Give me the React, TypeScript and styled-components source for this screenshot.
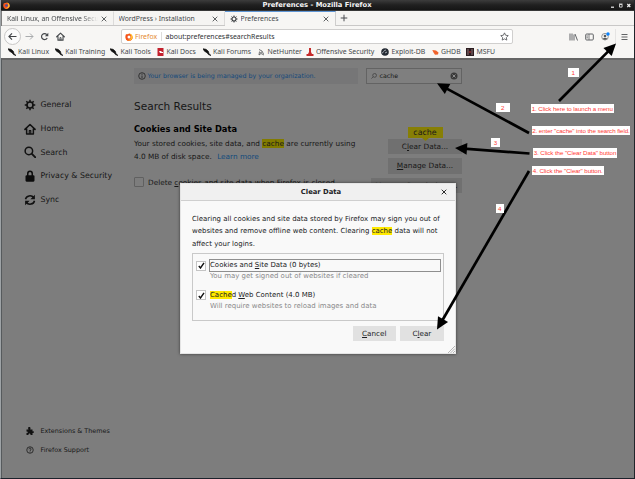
import React from "react";
import styled, { createGlobalStyle, css } from "styled-components";

const GlobalStyle = createGlobalStyle`
  * { box-sizing: border-box; }
  html, body { margin: 0; padding: 0; overflow: hidden; }
  body { font-family: "DejaVu Sans", Verdana, sans-serif; }
`;

const Window = styled.div`
  position: relative;
  width: 635px;
  height: 479px;
  display: flex;
  flex-direction: column;
  overflow: hidden;
  background: #7d7d7d;
  border-left: 1px solid #9ea3a6;
  border-right: 1px solid #20252a;
  border-bottom: 1px solid #1b222b;
`;

const TitleBar = styled.header`
  height: 11px;
  flex: none;
  display: flex;
  align-items: center;
  padding: 0 3px 1px 2px;
  background: linear-gradient(#3c3c3c, #202020 45%, #161616 88%, #4c4c4c);
  color: #f4f4f4;
`;

const Title = styled.h1`
  flex: 1;
  margin: 0;
  text-align: center;
  font-size: 6.75px;
  line-height: 9px;
  font-weight: 700;
  padding-left: 14px;
`;

const WindowButtons = styled.div`
  display: flex;
  height: 9px;
`;

const chromeFont = css`
  font-family: "Noto Sans", "Open Sans", sans-serif;
  color: #45484b;
  white-space: nowrap;
`;

const TabStrip = styled.nav`
  height: 15px;
  flex: none;
  display: flex;
  background: #f5f4f2;
  border-bottom: 1px solid #c9c8c7;
  margin-left: 1px;
`;

const Tab = styled.div<{ $width: number; $active?: boolean }>`
  ${chromeFont}
  width: ${(p) => p.$width}px;
  height: ${(p) => (p.$active ? 15 : 14)}px;
  display: flex;
  align-items: center;
  gap: 3px;
  font-size: 6.85px;
  line-height: 12px;
  padding: 0 6px 0 5px;
  border-right: 1px solid ${(p) => (p.$active ? "#cfcecd" : "#dcdbda")};
  border-top: 1px solid ${(p) => (p.$active ? "#5f96d5" : "#f5f4f2")};
  background: ${(p) => (p.$active ? "#f7f6f4" : "transparent")};
  svg { flex: none; }
`;

const TabLabel = styled.span<{ $fade?: boolean }>`
  flex: 1;
  overflow: hidden;
  ${(p) => p.$fade && "mask-image: linear-gradient(90deg, #000 82%, transparent);"}
`;

const NewTab = styled.div`
  display: flex;
  align-items: center;
  padding-left: 4px;
`;

const Toolbar = styled.div`
  height: 21px;
  flex: none;
  display: flex;
  align-items: center;
  padding: 0 6px 0 3px;
  background: #f7f6f4;
`;

const NavButtons = styled.div`
  display: flex;
  align-items: center;
  gap: 6.5px;
  width: 116.5px;
`;

const BackButton = styled.div`
  width: 17px;
  height: 17px;
  margin-right: -3px;
  display: grid;
  place-items: center;
  border: 1px solid #c8c7c6;
  border-radius: 50%;
  background: #fbfbfb;
`;

const UrlBar = styled.div`
  ${chromeFont}
  width: 392px;
  height: 15px;
  display: flex;
  align-items: center;
  padding: 0 2.5px 0 3.5px;
  background: #fff;
  border: 1px solid #d0cfce;
  border-radius: 2px;
  font-size: 6.93px;
`;

const Identity = styled.span`
  display: flex;
  align-items: center;
  gap: 2px;
  color: #e58a2e;
  padding-right: 4px;
  border-right: 1px solid #dddcdb;
  margin-right: 3.5px;
`;

const Address = styled.span`
  flex: 1;
  color: #303336;
`;

const ToolIcons = styled.div`
  flex: 1;
  display: flex;
  align-items: center;
  justify-content: flex-end;
  gap: 7px;
`;

const MenuSlot = styled.div`
  display: flex;
  align-items: center;
  height: 16px;
  padding-left: 5px;
  border-left: 1px solid #e5e4e3;
  margin-left: -2px;
`;

const Bookmarks = styled.div`
  height: 11px;
  flex: none;
  display: flex;
  align-items: center;
  padding: 0 0 1px 7px;
  background: #f7f6f4;
`;

const Bookmark = styled.div<{ $width: number }>`
  ${chromeFont}
  width: ${(p) => p.$width}px;
  flex: none;
  display: flex;
  align-items: center;
  gap: 2px;
  font-size: 6.9px;
  line-height: 10px;
  svg { flex: none; }
`;

const Page = styled.main`
  flex: 1;
  display: flex;
  border-top: 2px solid #656565;
  border-left: 1px solid #565a5d;
  color: #171717;
  background: #7d7d7d;
`;

const Sidebar = styled.aside`
  width: 132px;
  flex: none;
  display: flex;
  flex-direction: column;
  justify-content: space-between;
  padding: 33px 0 18px 22px;
`;

const NavList = styled.ul<{ $small?: boolean }>`
  list-style: none;
  margin: 0;
  padding: 0;
  font-size: ${(p) => (p.$small ? 6.42 : 7.83)}px;
  li {
    height: ${(p) => (p.$small ? 19.2 : 23.7)}px;
    display: flex;
    align-items: center;
    gap: 4.5px;
    white-space: nowrap;
  }
  li svg { flex: none; width: 12px; }
`;

const Content = styled.section`
  width: 328px;
  padding-top: 8px;
`;

const TopRow = styled.div`
  display: flex;
  justify-content: space-between;
`;

const Notice = styled.div`
  width: 223.5px;
  height: 15.5px;
  display: flex;
  align-items: center;
  gap: 2px;
  padding-left: 3.5px;
  font-size: 6.3px;
  color: #144a7c;
  background: #767677;
`;

const SearchBox = styled.div`
  width: 96px;
  height: 15.5px;
  display: flex;
  align-items: center;
  gap: 2.5px;
  padding: 0 3px 0 4px;
  font-size: 6.25px;
  border: 1px solid #636363;
  background: #7f7f7f;
  span { flex: 1; }
`;

const PageTitle = styled.h2`
  margin: 12px 0 0;
  font-size: 10.55px;
  line-height: 20px;
  font-weight: 400;
`;

const Columns = styled.div`
  display: flex;
  justify-content: space-between;
  margin-top: 2px;
`;

const Description = styled.div`
  width: 225px;
  font-size: 7.32px;
  line-height: 13.4px;
  white-space: nowrap;
  h3 { margin: 5px 0 1px; font-size: 8.3px; line-height: 13px; color: #000; }
  p { margin: 0; }
`;

const Mark = styled.mark<{ $dim?: boolean }>`
  color: inherit;
  background: ${(p) => (p.$dim ? "#827b00" : "#ffe900")};
`;

const Link = styled.a`
  color: #124a7c;
  margin-left: 3px;
`;

const CheckRow = styled.div`
  display: flex;
  align-items: center;
  gap: 4px;
  margin-top: 14px;
  height: 10px;
`;

const EmptyBox = styled.span`
  width: 10px;
  height: 10px;
  border: 1px solid #606060;
  border-radius: 1px;
`;

const Actions = styled.div`
  display: flex;
  flex-direction: column;
  align-items: flex-end;
  gap: 4.5px;
  padding-top: 9.5px;
`;

const FoundTip = styled.div`
  width: 35px;
  height: 11px;
  margin: 0 19.5px -4px 0;
  text-align: center;
  font-size: 7.9px;
  line-height: 11.5px;
  background: #877f05;
`;

const PageButton = styled.div<{ $width: number }>`
  width: ${(p) => p.$width}px;
  height: 15.3px;
  font-size: 7.38px;
  line-height: 15px;
  text-align: center;
  white-space: nowrap;
  background: #707070;
`;

const FoundPointer = styled.svg`
  position: absolute;
  left: 421px;
  top: 138px;
`;

const Dialog = styled.div`
  position: absolute;
  left: 179px;
  top: 183px;
  width: 276px;
  height: 171px;
  display: flex;
  flex-direction: column;
  color: #202124;
  background: #f9f9f9;
  border: 1px solid #e4e4e4;
  box-shadow: 0 0 3px rgba(0, 0, 0, 0.55);
`;

const DialogTitle = styled.div`
  height: 17px;
  flex: none;
  display: flex;
  align-items: center;
  padding: 0 8px 0 20px;
  background: #f0f0f0;
  border-bottom: 1px solid #cfcfcf;
  font-size: 6.8px;
  font-weight: 700;
  span { flex: 1; text-align: center; }
`;

const DialogBody = styled.div`
  flex: 1;
  padding: 12px 11.5px 0 11px;
  font-size: 6.97px;
`;

const DialogText = styled.p`
  margin: 0;
  line-height: 12.25px;
  white-space: nowrap;
`;

const Options = styled.div`
  height: 67.500px;
  margin-top: 3.5px;
  padding: 5px 2px 0 3px;
  border: 1px solid #c9c9c9;
`;

const Option = styled.div`
  height: 29.7px;
  display: grid;
  grid-template-columns: 9px 1fr;
  column-gap: 4px;
  grid-template-rows: 13px 9px;
  align-items: center;
`;

const Box = styled.span`
  width: 10px;
  height: 10px;
  display: grid;
  place-items: center;
  border: 1px solid #c4c4c4;
  background: #fff;
`;

const OptionLabel = styled.span<{ $focus?: boolean }>`
  height: 13px;
  line-height: 11.5px;
  border: 1px solid ${(p) => (p.$focus ? "#8f8f8f" : "transparent")};
`;

const Hint = styled.span`
  grid-column: 2;
  line-height: 9px;
  padding-left: 1px;
  color: #8a8a8b;
`;

const DialogButtons = styled.div`
  display: flex;
  justify-content: flex-end;
  gap: 4.5px;
  margin-top: 5px;
`;

const DialogButton = styled.div`
  width: 43.2px;
  height: 15.6px;
  font-size: 7.2px;
  line-height: 15px;
  text-align: center;
  background: #e1e1e1;
`;

const Grip = styled.svg`
  position: absolute;
  right: 0;
  bottom: 0;
`;

const Arrows = styled.svg`
  position: absolute;
  left: -1px;
  top: 0;
`;

const Note = styled.div<{ $x: number; $y: number; $w: number; $h?: number }>`
  position: absolute;
  left: ${(p) => p.$x - 1}px;
  top: ${(p) => p.$y}px;
  width: ${(p) => p.$w}px;
  height: ${(p) => p.$h ?? 9}px;
  line-height: ${(p) => p.$h ?? 9}px;
  text-align: center;
  white-space: nowrap;
  font-family: "Liberation Sans", Arial, sans-serif;
  font-size: 6.2px;
  letter-spacing: -0.08px;
  color: #ff3a35;
  background: #fff;
`;

const Firefox = ({ size = 8 }: { size?: number }) => (
  <svg width={size} height={size} viewBox="0 0 16 16">
    <circle cx="8" cy="8.5" r="7" fill="#ff7a1a" />
    <path d="M1 6 2 2l3 2 4-3 5 4 1 6-4 4-5 1-4-3z" fill="#f4511e" />
    <path d="M9 1c4 1 6 4 6 8-1 5-6 7-10 5 5 0 7-3 7-6s-1-5-3-7z" fill="#ffc52e" />
    <circle cx="8" cy="8" r="3" fill={size > 7.5 ? "#fff" : "#47519e"} />
  </svg>
);

const Close = ({ size = 6, color = "#55585b" }: { size?: number; color?: string }) => (
  <svg width={size} height={size} viewBox="0 0 6 6" stroke={color} strokeWidth="0.95">
    <path d="M.7.7 5.3 5.3M5.3.7.7 5.3" />
  </svg>
);

const Gear = ({ size = 12, color = "#111" }: { size?: number; color?: string }) => (
  <svg width={size} height={size} viewBox="0 0 16 16" fill="none" stroke={color}>
    <circle cx="8" cy="8" r="4" strokeWidth="2.2" />
    <path strokeWidth="2" d="M8 1v3M8 12v3M1 8h3M12 8h3M3.1 3.1l2 2M10.9 10.9l2 2M12.9 3.1l-2 2M5.1 10.9l-2 2" />
  </svg>
);

const House = ({ size = 12, color = "#111" }: { size?: number; color?: string }) => (
  <svg width={size} height={size} viewBox="0 0 16 16" fill="none" stroke={color} strokeWidth="2" strokeLinejoin="round" strokeLinecap="round">
    <path d="M1.2 8.5 8 2l6.8 6.5M3.5 8v6.5h9V8" />
    <path d="M7 14v-4h2v4" strokeWidth="1.5" />
  </svg>
);

const Magnifier = () => (
  <svg width="12" height="12" viewBox="0 0 16 16" fill="none" stroke="#111" strokeWidth="2">
    <circle cx="6.5" cy="6.5" r="5" />
    <path d="m10.2 10.2 5 5" strokeWidth="2.5" strokeLinecap="round" />
  </svg>
);

const Lock = () => (
  <svg width="12" height="12" viewBox="0 0 16 16">
    <rect x="2" y="7" width="12" height="8.5" rx="1.5" fill="#0c0c0c" />
    <path d="M5 8V5a3 3.2 0 0 1 6 0v3" fill="none" stroke="#0c0c0c" strokeWidth="2" />
  </svg>
);

const Sync = () => (
  <svg width="12" height="12" viewBox="0 0 16 16" fill="none" stroke="#111" strokeWidth="2">
    <path d="M2 7a6 5.5 0 0 1 11-2M14 9a6 5.5 0 0 1-11 2" />
    <path d="M14.5 1v6h-6zM1.5 15V9h6z" fill="#111" stroke="none" />
  </svg>
);

const Puzzle = () => (
  <svg width="8" height="8" viewBox="0 0 16 16" fill="#111">
    <path d="M1 5h4C3 1 5 0 6.500 0S10 1 8.500 5H13v4c4-1.500 4 4 0 3v4H9c1-4-5-4-4 0H1v-4c4 0 4-3 0-3z" />
  </svg>
);

const Help = () => (
  <svg width="8" height="8" viewBox="0 0 16 16" fill="none" stroke="#1a1a1a" strokeWidth="1.6">
    <circle cx="8" cy="8" r="6.500" />
    <path d="M5.800 6.500c0-3 4.400-3 4.400-.3C10.200 8 8 8 8 10M8 11v1.700" />
  </svg>
);

const Dragon = () => (
  <svg width="8" height="8" viewBox="0 0 8 8">
    <path d="M0 .8 3 1.300 5.300 3.200 6 5.600 8 7.600 5.500 6.600 4 4.700 1.500 3.200z" fill="#111" stroke="#111" strokeWidth=".7" />
  </svg>
);

const Docs = () => (
  <svg width="7" height="8" viewBox="0 0 7 8">
    <rect x=".5" width="6" height="8" fill="#c3202d" />
    <path d="M2 3h2.500v1H6v1H3z" fill="#fff" />
  </svg>
);

const Hunter = () => (
  <svg width="7" height="8" viewBox="0 0 7 8" fill="none" stroke="#505356" strokeWidth=".8">
    <path d="M1 1.500 4 3 5.500 6M1.500 3.500 1 7l2-1.500 3 1.500M2 5l2-1" />
  </svg>
);

const Tower = () => (
  <svg width="8" height="8" viewBox="0 0 8 8" fill="#c52a2a">
    <path d="M3 0h2v4l1 2h1.500v2H.5V6H2l1-2z" />
  </svg>
);

const Exploit = () => (
  <svg width="8" height="8" viewBox="0 0 8 8">
    <circle cx="4" cy="4" r="3.800" fill="#242a33" />
    <path d="M1 5c2 0 1-3 4-3M4 5l2-1" stroke="#c7ccd2" strokeWidth=".8" fill="none" />
  </svg>
);

const Bug = () => (
  <svg width="7" height="8" viewBox="0 0 7 8">
    <path d="M.3 2 4 2.500l2.500 2-.5 2L3 6.800 1.500 4.500z" fill="#f0622b" />
  </svg>
);

const Msf = () => (
  <svg width="8" height="8" viewBox="0 0 8 8">
    <rect width="8" height="8" fill="#2b1d20" />
    <path d="M2 1v6M6 1v6" stroke="#a98c8e" strokeWidth=".8" />
    <path d="M3 4h2" stroke="#c33" />
  </svg>
);

const bookmarks = [
  { label: "Kali Linux", icon: <Dragon />, width: 47.3 },
  { label: "Kali Training", icon: <Dragon />, width: 55.2 },
  { label: "Kali Tools", icon: <Dragon />, width: 47 },
  { label: "Kali Docs", icon: <Docs />, width: 45.500 },
  { label: "Kali Forums", icon: <Dragon />, width: 55.500 },
  { label: "NetHunter", icon: <Hunter />, width: 47.500 },
  { label: "Offensive Security", icon: <Tower />, width: 75.500 },
  { label: "Exploit-DB", icon: <Exploit />, width: 50.500 },
  { label: "GHDB", icon: <Bug />, width: 34.500 },
  { label: "MSFU", icon: <Msf />, width: 32 },
];

const arrows = [
  { from: [559, 101], to: [616, 43.500] },
  { from: [529, 133], to: [437, 83.300] },
  { from: [529.500, 153.500], to: [455, 148] },
  { from: [529, 171], to: [437, 329.500] },
];

const Arrow = ({ from, to }: { from: number[]; to: number[] }) => {
  const angle = (Math.atan2(to[1] - from[1], to[0] - from[0]) * 180) / Math.PI;
  const length = Math.hypot(to[0] - from[0], to[1] - from[1]);
  return (
    <g transform={`translate(${from[0]} ${from[1]}) rotate(${angle})`}>
      <path d={`M0 0H${length - 9}`} stroke="#000" strokeWidth="2.700" />
      <path d={`M${length} 0l-12-5.800v11.600z`} />
    </g>
  );
};

const Tick = () => (
  <svg width="7" height="7" viewBox="0 0 7 7" fill="none" stroke="#111" strokeWidth="1.400">
    <path d="m.8 4 1.700 2L6 .8" />
  </svg>
);

export default function App() {
  return (
    <Window>
      <GlobalStyle />
      <TitleBar>
        <Firefox size={7} />
        <Title>Preferences - Mozilla Firefox</Title>
        <WindowButtons>
          <svg width="21" height="9" viewBox="0 0 21 9" fill="none" stroke="#eee">
            <path d="M1 6.200h3" strokeWidth="1.200" />
            <path d="M9.500 3.500h2.600v2.600H9.500zM9 3h3.500" strokeWidth=".8" />
            <path d="m17.300 3 3 3m0-3-3 3" strokeWidth="1.200" />
          </svg>
        </WindowButtons>
      </TitleBar>

      <TabStrip>
        <Tab $width={111.500}>
          <TabLabel $fade>Kali Linux, an Offensive Security</TabLabel>
          <Close />
        </Tab>
        <Tab $width={111}>
          <TabLabel>WordPress › Installation</TabLabel>
          <Close />
        </Tab>
        <Tab $width={111.500} $active>
          <Gear size={8} color="#3c3f42" />
          <TabLabel>Preferences</TabLabel>
          <Close />
        </Tab>
        <NewTab>
          <svg width="8" height="8" viewBox="0 0 8 8" stroke="#4a4d50">
            <path d="M4 .7v6.600M.7 4h6.600" />
          </svg>
        </NewTab>
      </TabStrip>

      <Toolbar>
        <NavButtons>
          <BackButton>
            <svg width="9" height="9" viewBox="0 0 9 9" fill="none" stroke="#3f4245" strokeWidth="1.100">
              <path d="M8.500 4.500H1M4 1.300.9 4.500 4 7.700" />
            </svg>
          </BackButton>
          <svg width="9" height="9" viewBox="0 0 9 9" fill="none" stroke="#a9abad">
            <path d="M.5 4.500H8M5 1.500l3 3-3 3" />
          </svg>
          <svg width="9" height="9" viewBox="0 0 9 9" fill="none" stroke="#46494c" strokeWidth="1.200">
            <path d="M7.200 6A3 3 0 1 1 6.800 2.600" />
            <path d="M8.300.7v3.500H4.800z" fill="#46494c" stroke="none" />
          </svg>
          <House size={9} color="#46494c" />
        </NavButtons>
        <UrlBar>
          <Identity>
            <Firefox size={8} />
            Firefox
          </Identity>
          <Address>about:preferences#searchResults</Address>
          <svg width="9" height="9" viewBox="0 0 16 16" fill="none" stroke="#55585b" strokeWidth="1.500" strokeLinejoin="round">
            <path d="m8 1.500 2 4.300 4.700.6-3.400 3.300.8 4.700L8 12.200l-4.100 2.200.8-4.700L1.300 6.400 6 5.800z" />
          </svg>
        </UrlBar>
        <ToolIcons>
          <svg width="9" height="8" viewBox="0 0 9 8" stroke="#606366">
            <path d="M1 .5v7M3 .5v7M5 1.500v6M6 1l2.500 6.500" />
          </svg>
          <svg width="9" height="8" viewBox="0 0 9 8" fill="none" stroke="#606366">
            <rect x=".7" y="1" width="7.600" height="6" rx="1" />
            <path d="M4 1v6M1.500 3H3M1.500 4.800H3" strokeWidth=".8" />
          </svg>
          <svg width="9" height="9" viewBox="0 0 9 9">
            <circle cx="4" cy="4.700" r="3.300" fill="none" stroke="#7b7e80" strokeWidth=".8" />
            <circle cx="4" cy="4" r="1.300" fill="#55585b" />
            <path d="M1.800 6.800c1-1.500 3.400-1.500 4.400 0L4 8z" fill="#55585b" />
            <circle cx="7" cy="2" r="1.700" fill="#0a84ff" />
          </svg>
          <MenuSlot>
            <svg width="7" height="8" viewBox="0 0 7 8" stroke="#505356" strokeWidth=".9">
              <path d="M.5 1.500h6M.5 4h6M.5 6.500h6" />
            </svg>
          </MenuSlot>
        </ToolIcons>
      </Toolbar>

      <Bookmarks>
        {bookmarks.map((b) => (
          <Bookmark key={b.label} $width={b.width}>
            {b.icon}
            {b.label}
          </Bookmark>
        ))}
      </Bookmarks>

      <Page>
        <Sidebar>
          <NavList>
            <li><Gear />General</li>
            <li><House />Home</li>
            <li><Magnifier />Search</li>
            <li><Lock />Privacy &amp; Security</li>
            <li><Sync />Sync</li>
          </NavList>
          <NavList $small>
            <li><Puzzle />Extensions &amp; Themes</li>
            <li><Help />Firefox Support</li>
          </NavList>
        </Sidebar>

        <Content>
          <TopRow>
            <Notice>
              <svg width="8" height="8" viewBox="0 0 8 8" fill="none" stroke="#222" strokeWidth=".8">
                <circle cx="4" cy="4" r="3.300" />
                <path d="M4 1.800v1M4 3.500v2.700" />
              </svg>
              Your browser is being managed by your organization.
            </Notice>
            <SearchBox>
              <svg width="6" height="6" viewBox="0 0 6 6" fill="none" stroke="#3c3c3c" strokeWidth=".7">
                <circle cx="3.600" cy="2.400" r="1.900" />
                <path d="M2.200 3.800.4 5.600" />
              </svg>
              <span>cache</span>
              <svg width="8" height="8" viewBox="0 0 8 8">
                <circle cx="4" cy="4" r="3.500" fill="#3a3a3a" />
                <path d="m2.500 2.500 3 3m0-3-3 3" stroke="#8c8c8c" />
              </svg>
            </SearchBox>
          </TopRow>
          <PageTitle>Search Results</PageTitle>
          <Columns>
            <Description>
              <h3>Cookies and Site Data</h3>
              <p>Your stored cookies, site data, and <Mark $dim>cache</Mark> are currently using</p>
              <p>4.0 MB of disk space. <Link>Learn more</Link></p>
              <CheckRow>
                <EmptyBox />
                <span>Delete <u>c</u>ookies and site data when Firefox is closed</span>
              </CheckRow>
            </Description>
            <Actions>
              <FoundTip>cache</FoundTip>
              <PageButton $width={74}>C<u>l</u>ear Data...</PageButton>
              <PageButton $width={74}><u>M</u>anage Data...</PageButton>
              <PageButton $width={91}>Manage P<u>e</u>rmissions...</PageButton>
            </Actions>
          </Columns>
        </Content>
      </Page>

      <FoundPointer width="7" height="3" viewBox="0 0 7 3">
        <path d="M0 0h7L3.500 3z" fill="#877f05" />
      </FoundPointer>

      <Dialog>
        <DialogTitle>
          <span>Clear Data</span>
          <Close color="#222" />
        </DialogTitle>
        <DialogBody>
          <DialogText>
            Clearing all cookies and site data stored by Firefox may sign you out of<br />
            websites and remove offline web content. Clearing <Mark>cache</Mark> data will not<br />
            affect your logins.
          </DialogText>
          <Options>
            <Option>
              <Box><Tick /></Box>
              <OptionLabel $focus>Cookies and <u>S</u>ite Data (0 bytes)</OptionLabel>
              <Hint>You may get signed out of websites if cleared</Hint>
            </Option>
            <Option>
              <Box><Tick /></Box>
              <OptionLabel><Mark>Cache</Mark>d <u>W</u>eb Content (4.0 MB)</OptionLabel>
              <Hint>Will require websites to reload images and data</Hint>
            </Option>
          </Options>
          <DialogButtons>
            <DialogButton><u>C</u>ancel</DialogButton>
            <DialogButton>C<u>l</u>ear</DialogButton>
          </DialogButtons>
        </DialogBody>
        <Grip width="7" height="7" viewBox="0 0 7 7" stroke="#999" strokeWidth=".7">
          <path d="M0 7 7 0M2.500 7 7 2.500M5 7l2-2" />
        </Grip>
      </Dialog>

      <Arrows width="635" height="479">
        {arrows.map((a, i) => <Arrow key={i} {...a} />)}
      </Arrows>
      <Note $x={568} $y={68} $w={10.500}>1</Note>
      <Note $x={496} $y={103} $w={13.500}>2</Note>
      <Note $x={491} $y={138} $w={9}>3</Note>
      <Note $x={495.500} $y={203.500} $w={8.500}>4</Note>
      <Note $x={531} $y={103.500} $w={82.500}>1. Click here to launch a menu</Note>
      <Note $x={531.700} $y={126.300} $w={98.500}>2. enter "cache" into the search field.</Note>
      <Note $x={533} $y={148} $w={84} $h={9.500}>3. Click the "Clear Data" button</Note>
      <Note $x={532} $y={166.300} $w={71.500}>4. Click the "Clear" button.</Note>
    </Window>
  );
}
